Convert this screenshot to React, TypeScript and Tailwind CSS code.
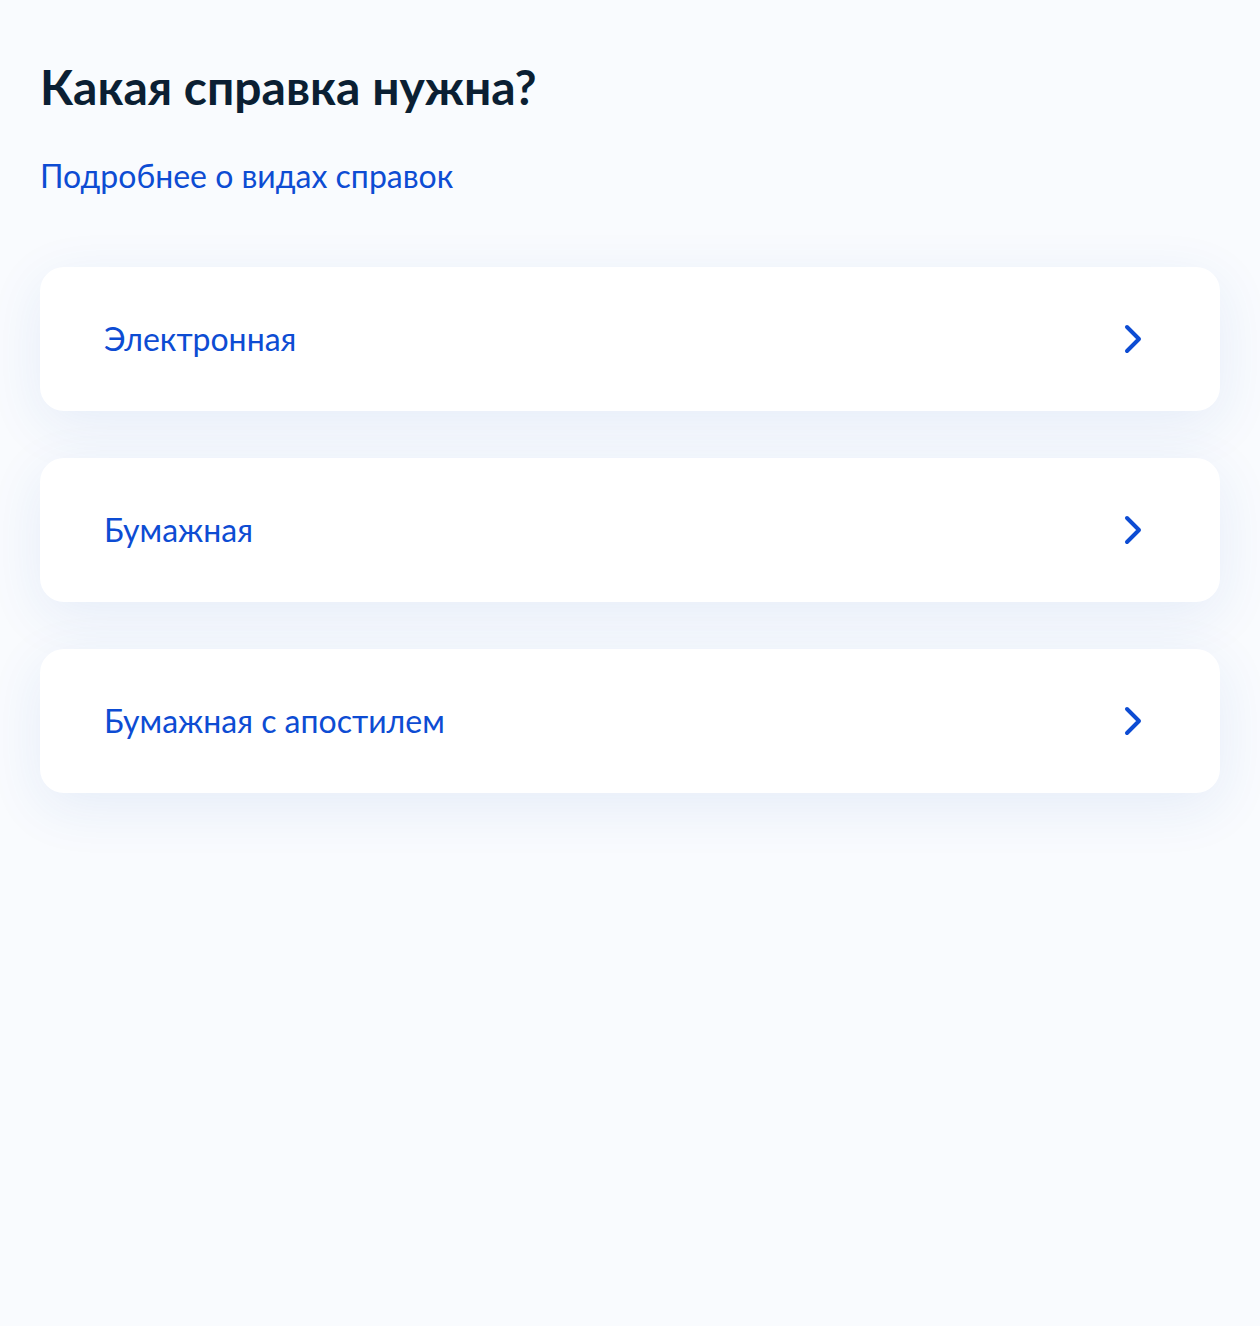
const items = ["Электронная", "Бумажная", "Бумажная с апостилем"];

function Chevron() {
  return (
    <svg width="20" height="32" viewBox="0 0 20 32" fill="none" className="shrink-0">
      <path
        d="M4 4L16 16L4 28"
        stroke="#0d4cd3"
        strokeWidth="4"
        strokeLinecap="round"
        strokeLinejoin="round"
      />
    </svg>
  );
}

export default function App() {
  return (
    <div
      className="min-h-[1326px] w-full bg-[#f9fbfe] px-10 pt-[55px]"
      style={{ fontFamily: "Lato, 'Noto Sans', sans-serif" }}
    >
      <h1 className="text-[48px] font-bold leading-[64px] text-[#0b1f33]">Какая справка нужна?</h1>
      <a className="mt-[37px] block w-fit text-[32px] leading-[40px] text-[#0d4cd3]">
        Подробнее о видах справок
      </a>
      <div className="mt-[71px] flex flex-col gap-[47px]">
        {items.map((t) => (
          <div
            key={t}
            className="flex h-[144px] items-center justify-between rounded-[24px] bg-white pl-16 pr-[77px] shadow-[0_14px_56px_rgba(29,92,185,0.09)]"
          >
            <span className="text-[32px] leading-[40px] text-[#0d4cd3]">{t}</span>
            <Chevron />
          </div>
        ))}
      </div>
    </div>
  );
}
